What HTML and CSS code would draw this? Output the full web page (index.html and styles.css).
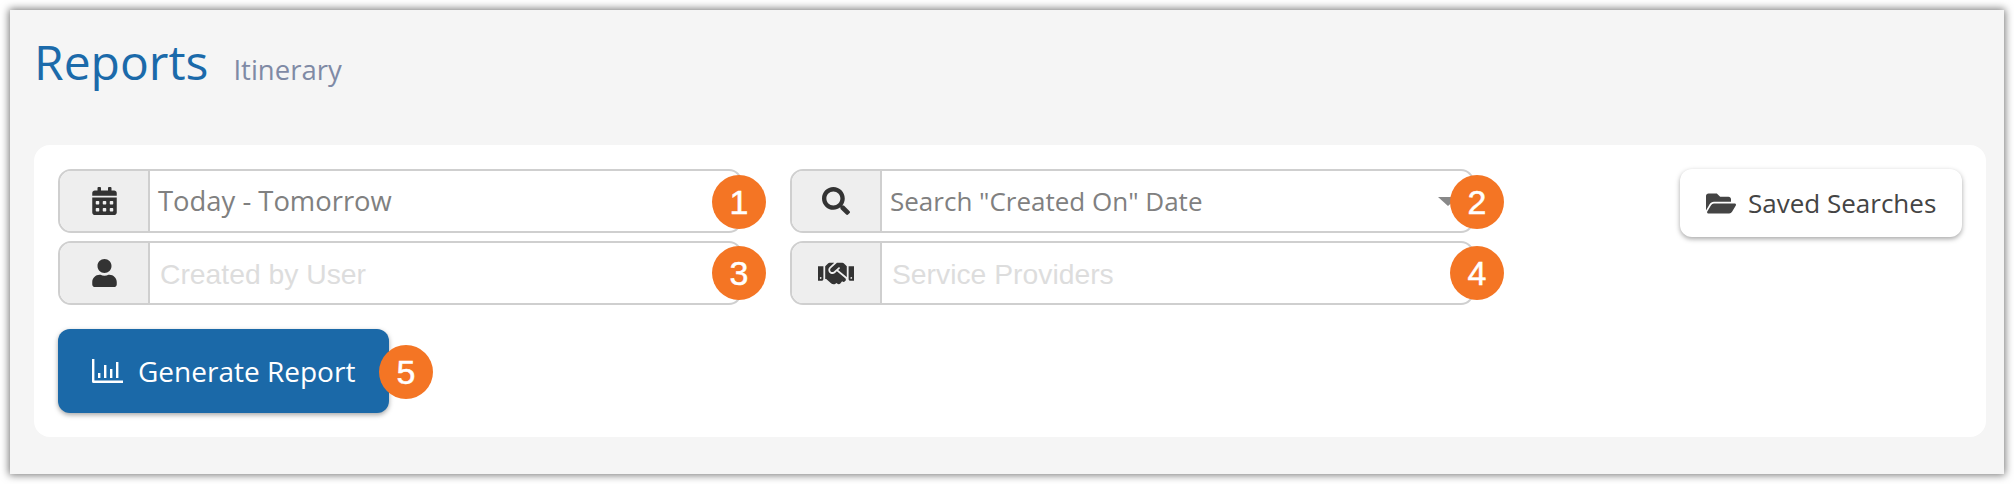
FILE: index.html
```html
<!DOCTYPE html>
<html lang="en">
<head>
    <meta charset="UTF-8">
    <meta name="viewport" content="width=device-width, initial-scale=1.0">
    <title>Reports - Itinerary</title>
    <link rel="stylesheet" href="styles.css">
</head>
<body>
    <div class="panel">
        <div class="page-head">
            <h1>Reports</h1>
            <span class="sub">Itinerary</span>
        </div>
        <div class="card">
            <div class="top">
                <div class="fields">
                    <div class="field">
                        <div class="addon">
                            <svg class="ico-user" viewBox="0 0 448 512"><path d="M0 464c0 26.5 21.5 48 48 48h352c26.5 0 48-21.5 48-48V192H0v272zm320-196c0-6.6 5.4-12 12-12h40c6.6 0 12 5.4 12 12v40c0 6.6-5.4 12-12 12h-40c-6.6 0-12-5.4-12-12v-40zm0 128c0-6.6 5.4-12 12-12h40c6.6 0 12 5.4 12 12v40c0 6.6-5.4 12-12 12h-40c-6.6 0-12-5.4-12-12v-40zM192 268c0-6.6 5.4-12 12-12h40c6.6 0 12 5.4 12 12v40c0 6.6-5.4 12-12 12h-40c-6.6 0-12-5.4-12-12v-40zm0 128c0-6.6 5.4-12 12-12h40c6.6 0 12 5.4 12 12v40c0 6.6-5.4 12-12 12h-40c-6.6 0-12-5.4-12-12v-40zM64 268c0-6.6 5.4-12 12-12h40c6.6 0 12 5.4 12 12v40c0 6.6-5.4 12-12 12H76c-6.6 0-12-5.4-12-12v-40zm0 128c0-6.6 5.4-12 12-12h40c6.6 0 12 5.4 12 12v40c0 6.6-5.4 12-12 12H76c-6.6 0-12-5.4-12-12v-40zM400 64h-48V16c0-8.8-7.2-16-16-16h-32c-8.8 0-16 7.2-16 16v48H160V16c0-8.8-7.2-16-16-16h-32c-8.8 0-16 7.2-16 16v48H48C21.5 64 0 85.5 0 112v48h448v-48c0-26.5-21.5-48-48-48z"/></svg>
                        </div>
                        <div class="value">Today - Tomorrow</div>
                        <span class="badge">1</span>
                    </div>
                    <div class="field wide-badge">
                        <div class="addon">
                            <svg class="ico-search" viewBox="0 0 512 512"><path d="M505 442.7L405.3 343c-4.5-4.5-10.6-7-17-7H372c27.6-35.3 44-79.7 44-128C416 93.1 322.9 0 208 0S0 93.1 0 208s93.1 208 208 208c48.3 0 92.7-16.4 128-44v16.3c0 6.4 2.5 12.5 7 17l99.7 99.7c9.4 9.4 24.6 9.4 33.9 0l28.3-28.3c9.4-9.4 9.4-24.6.1-34zM208 336c-70.7 0-128-57.2-128-128 0-70.7 57.2-128 128-128 70.7 0 128 57.2 128 128 0 70.7-57.2 128-128 128z"/></svg>
                        </div>
                        <div class="value small">Search "Created On" Date</div>
                        <span class="caret"></span>
                        <span class="badge">2</span>
                    </div>
                    <div class="field">
                        <div class="addon">
                            <svg class="ico-user" viewBox="0 0 448 512"><path d="M224 256c70.7 0 128-57.3 128-128S294.7 0 224 0 96 57.3 96 128s57.3 128 128 128zm89.6 32h-16.7c-22.2 10.2-46.9 16-72.9 16s-50.6-5.8-72.9-16h-16.7C60.2 288 0 348.2 0 422.4V464c0 26.5 21.5 48 48 48h352c26.5 0 48-21.5 48-48v-41.6c0-74.2-60.2-134.4-134.4-134.4z"/></svg>
                        </div>
                        <div class="value placeholder">Created by User</div>
                        <span class="badge">3</span>
                    </div>
                    <div class="field wide-badge">
                        <div class="addon">
                            <svg class="ico-hands" viewBox="0 0 640 512"><path d="M434.7 64h-85.9c-8 0-15.7 3-21.6 8.4l-98.3 90c-.1.1-.2.3-.3.4-16.6 15.6-16.3 40.5-2.1 56 12.7 13.9 39.4 17.6 56.1 2.7.1-.1.3-.1.4-.2l79.9-73.2c6.5-5.9 16.7-5.5 22.6 1 6 6.5 5.5 16.6-1 22.6l-26.1 23.9L504 313.8c2.9 2.4 5.5 5 7.9 7.7V128l-54.6-54.6c-5.9-6-14.1-9.4-22.6-9.4zM544 128.2v223.9c0 17.7 14.3 32 32 32h64V128.2h-96zm48 223.9c-8.8 0-16-7.2-16-16s7.2-16 16-16 16 7.2 16 16-7.2 16-16 16zM0 384h64c17.7 0 32-14.3 32-32V128.2H0V384zm48-63.9c8.8 0 16 7.2 16 16s-7.2 16-16 16-16-7.2-16-16c0-8.9 7.2-16 16-16zm435.9 18.6L334.6 217.5l-30 27.5c-29.7 27.1-75.2 24.5-101.7-4.4-26.9-29.4-24.8-74.9 4.4-101.7L289.1 64h-83.8c-8.5 0-16.6 3.4-22.6 9.4L128 128v223.9h18.3l90.5 81.9c27.4 22.3 67.7 18.1 90-9.3l.2-.2 17.9 15.5c15.9 13 39.4 10.5 52.3-5.4l31.4-38.6 5.4 4.4c13.7 11.1 33.9 9.1 45-4.7l9.5-11.7c11.2-13.8 9.1-33.9-4.6-45.1z"/></svg>
                        </div>
                        <div class="value placeholder">Service Providers</div>
                        <span class="badge">4</span>
                    </div>
                </div>
                <button class="btn-saved">
                    <svg viewBox="0 0 576 512"><path d="M572.694 292.093L500.27 416.248A63.997 63.997 0 0 1 444.989 448H45.025c-18.523 0-30.064-20.093-20.731-36.093l72.424-124.155A64 64 0 0 1 152 256h399.964c18.523 0 30.064 20.093 20.73 36.093zM152 224h328v-48c0-26.51-21.49-48-48-48H272l-64-64H48C21.49 64 0 85.49 0 112v278.046l69.077-118.418C86.214 242.25 117.989 224 152 224z"/></svg>
                    Saved Searches
                </button>
            </div>
            <button class="btn-generate">
                <svg viewBox="0 0 31 24"><path d="M0 0h2.4v21.4H31V24H1.5A1.5 1.5 0 0 1 0 22.5zM6 14h2.4v5H6zM12 6h2.4v13H12zM18 10h2.4v9H18zM24 3h2.4v16H24z"/></svg>
                Generate Report
                <span class="badge">5</span>
            </button>
        </div>
    </div>
</body>
</html>
```

FILE: styles.css
```css
* {
    box-sizing: border-box;
}
body {
    margin: 0;
    padding: 10px;
    background: #fff;
    font-family: "Open Sans", "Liberation Sans", sans-serif;
}
.panel {
    height: 464px;
    padding: 0 18px 0 24px;
    background: #f5f5f5;
    box-shadow: 0 0 8px 1px rgba(0, 0, 0, 0.55);
}
.page-head {
    display: flex;
    align-items: baseline;
    height: 135px;
    padding: 21px 0 0 0;
}
.page-head h1 {
    margin: 0;
    font-size: 48px;
    line-height: 62px;
    font-weight: 400;
    color: #1b6aaa;
}
.page-head .sub {
    margin-left: 25px;
    font-size: 27.5px;
    color: #7f8aa5;
}
.card {
    height: 292px;
    padding: 24px;
    background: #fff;
    border-radius: 16px;
}
.top {
    display: flex;
    justify-content: space-between;
    align-items: flex-start;
}
.fields {
    display: grid;
    grid-template-columns: 684px 684px;
    column-gap: 48px;
    row-gap: 8px;
}
.field {
    position: relative;
    display: flex;
    height: 64px;
    border: 2px solid #cfcfcf;
    border-radius: 13px;
}
.addon {
    display: flex;
    align-items: center;
    justify-content: center;
    width: 90px;
    flex-shrink: 0;
    background: #eee;
    border-right: 2px solid #cfcfcf;
    border-radius: 11px 0 0 11px;
}
.addon svg {
    display: block;
    fill: #333;
}
.ico-user {
    width: 25px;
    height: 28px;
}
.ico-search {
    width: 28px;
    height: 28px;
}
.ico-hands {
    width: 36px;
    height: 29px;
}
.value {
    padding-left: 8px;
    font-size: 27.4px;
    line-height: 60px;
    color: #808080;
}
.value.small {
    font-size: 26px;
}
.value.placeholder {
    padding-left: 10px;
    font-family: "Liberation Sans", sans-serif;
    font-size: 28.3px;
    line-height: 62px;
    color: #ddd;
}
.caret {
    position: absolute;
    top: 26px;
    right: 14px;
    border-left: 10px solid transparent;
    border-right: 10px solid transparent;
    border-top: 9px solid #888;
}
.badge {
    position: absolute;
    top: 4px;
    right: -26px;
    width: 54px;
    height: 54px;
    border-radius: 50%;
    background: #f47524;
    color: #fff;
    font-family: "Liberation Sans", sans-serif;
    font-size: 34px;
    line-height: 54px;
    text-align: center;
    -webkit-text-stroke: 0.5px #fff;
}
.field:nth-child(3) .badge,
.field:nth-child(4) .badge {
    top: 3px;
}
.wide-badge .badge {
    right: -32px;
}
.btn-saved,
.btn-generate {
    display: flex;
    align-items: center;
    border: 0;
    border-radius: 12px;
    font-family: inherit;
}
.btn-saved {
    width: 282px;
    height: 68px;
    padding: 0 0 0 26px;
    gap: 12px;
    background: #fff;
    color: #444;
    font-size: 26px;
    box-shadow: 0 2px 5px rgba(0, 0, 0, 0.35);
}
.btn-saved svg {
    width: 30px;
    height: 27px;
    fill: #444;
}
.btn-generate {
    position: relative;
    width: 331px;
    height: 84px;
    margin-top: 24px;
    padding: 0 0 0 34px;
    gap: 15px;
    background: #1b69a8;
    color: #fff;
    font-size: 28px;
    box-shadow: 0 2px 5px rgba(0, 0, 0, 0.35);
}
.btn-generate svg {
    width: 31px;
    height: 24px;
    fill: #fff;
}
.btn-generate .badge {
    top: 16px;
    right: -44px;
}
```
